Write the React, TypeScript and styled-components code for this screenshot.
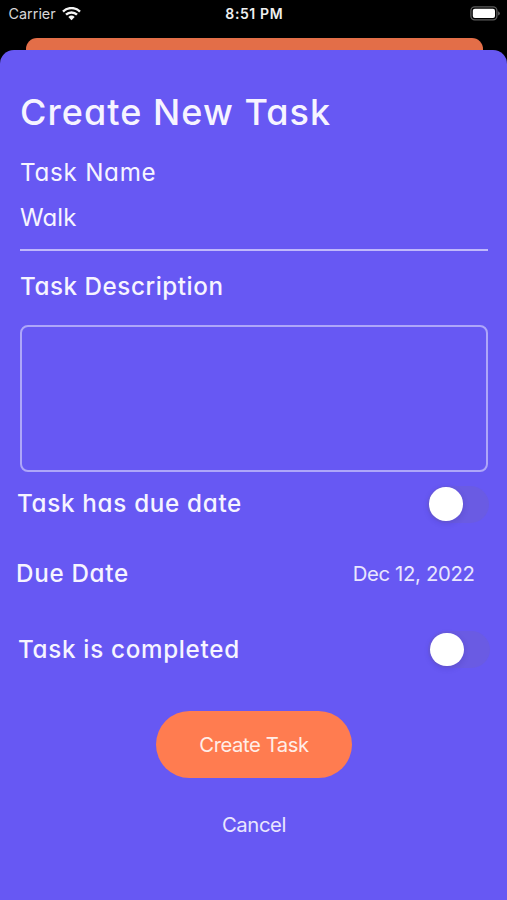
import React, { useState } from "react";
import styled, { createGlobalStyle } from "styled-components";

const GlobalStyle = createGlobalStyle`
  * { box-sizing: border-box; }
  body { margin: 0; background: #000; }
  button, input, textarea { font: inherit; color: inherit; }
`;

const Screen = styled.div`
  display: flex;
  flex-direction: column;
  width: 507px;
  height: 900px;
  overflow: hidden;
  background: #000;
  color: #f6f4ff;
  font-family: Inter, sans-serif;
`;

const StatusBar = styled.header`
  display: grid;
  grid-template-columns: 1fr auto 1fr;
  align-items: center;
  height: 28px;
  margin-bottom: 9.5px;
  padding: 0 7px 0 8.5px;
  flex: none;
`;

const Carrier = styled.div`
  display: flex;
  align-items: center;
  gap: 6px;
  font-size: 14.4px;
  line-height: 28px;
  color: #d6d6d6;
`;

const Clock = styled.div`
  margin-top: -1px;
  font-size: 14px;
  font-weight: 600;
  letter-spacing: 0.6px;
  color: #efefef;
`;

const Battery = styled.svg`
  justify-self: end;
  margin-bottom: 1px;
`;

const BackCard = styled.div`
  flex: none;
  height: 28px;
  margin: 0 24.5px 0 25.5px;
  border-radius: 11px 11px 0 0;
  background: #e36e48;
`;

const Sheet = styled.main`
  flex: none;
  display: flex;
  flex-direction: column;
  height: 850.5px;
  margin-top: -15.9px;
  padding: 0 19px 0 20px;
  border-radius: 14px 14px 0 0;
  background: #6758f3;
`;

const Title = styled.h1`
  margin: 34.6px 0 0;
  font-size: 36px;
  font-weight: 500;
  line-height: 56px;
  letter-spacing: 1.05px;
  font-feature-settings: "cv11";
  white-space: nowrap;
`;

const Label = styled.label<{ $weight?: number; $spacing?: number }>`
  display: block;
  font-size: 24.2px;
  font-weight: ${(p) => p.$weight ?? 500};
  line-height: 40px;
  letter-spacing: ${(p) => p.$spacing ?? 0.7}px;
  font-feature-settings: "cv11";
  white-space: nowrap;
`;

const NameField = styled.div`
  display: flex;
  flex-direction: column;
  margin-top: 13px;
`;

const NameInput = styled.input`
  width: 100%;
  height: 54px;
  margin-top: 4px;
  padding: 0 0 11px;
  border: 0;
  border-bottom: 2px solid #bfb8fb;
  border-radius: 0;
  outline: 0;
  background: transparent;
  font-size: 24px;
  letter-spacing: 0.1px;
  font-feature-settings: "cv11";
`;

const DescriptionField = styled.div`
  display: flex;
  flex-direction: column;
  margin-top: 15.5px;
`;

const DescriptionInput = styled.textarea`
  width: 100%;
  height: 147.3px;
  margin-top: 18px;
  padding: 10px;
  border: 2px solid #aea6f9;
  border-radius: 8px;
  outline: 0;
  resize: none;
  background: transparent;
`;

const OptionRow = styled.div<{ $top: number; $shift?: number }>`
  display: flex;
  align-items: center;
  justify-content: space-between;
  height: 40px;
  margin: ${(p) => p.$top}px -2px 0 ${(p) => p.$shift ?? -3}px;
`;

const Track = styled.button<{ $on: boolean; $shift: number }>`
  display: flex;
  align-items: center;
  justify-content: ${(p) => (p.$on ? "flex-end" : "flex-start")};
  width: 62px;
  height: 37px;
  margin-right: ${(p) => -p.$shift}px;
  padding: 0 2px;
  border: 0;
  border-radius: 19px;
  background: ${(p) => (p.$on ? "#34c759" : "#6a5be3")};
`;

const Knob = styled.span`
  width: 33.5px;
  height: 33.5px;
  border-radius: 50%;
  background: #fff;
  box-shadow: 0 2px 6px rgba(30, 20, 100, 0.16);
`;

const DateValue = styled.span`
  margin-right: 15.5px;
  font-size: 20.3px;
  letter-spacing: -0.33px;
  color: #e9e6fe;
`;

const Actions = styled.div`
  display: flex;
  flex-direction: column;
  align-items: center;
  margin-top: 41.3px;
`;

const PrimaryButton = styled.button`
  width: 196px;
  height: 67px;
  padding: 0;
  border: 0;
  border-radius: 34px;
  background: #ff7c50;
  color: #ffeee8;
  font-size: 20.3px;
  letter-spacing: -0.45px;
`;

const CancelButton = styled.button`
  margin-top: 27px;
  padding: 0 20px;
  border: 0;
  background: transparent;
  color: #e9e6fe;
  font-size: 20.3px;
  line-height: 40px;
  letter-spacing: -0.4px;
`;

const WifiIcon = () => (
  <svg width="19" height="14" viewBox="0 0 19 14">
    <g fill="none" stroke="#f4f4f4" strokeWidth="2.4">
      <path d="M1 4.6A12 12 0 0 1 18 4.6" />
      <path d="M4 7.7A7.8 7.8 0 0 1 15 7.7" />
    </g>
    <path d="M6.3 10Q9.5 7.2 12.7 10L9.5 13.3Z" fill="#f4f4f4" />
  </svg>
);

function Toggle({ label, shift = 0 }: { label: string; shift?: number }) {
  const [on, setOn] = useState(false);
  return (
    <Track type="button" role="switch" aria-label={label} aria-checked={on} $on={on} $shift={shift} onClick={() => setOn(!on)}>
      <Knob />
    </Track>
  );
}

export default function App() {
  const [name, setName] = useState("Walk");
  return (
    <Screen>
      <GlobalStyle />
      <StatusBar>
        <Carrier>
          Carrier
          <WifiIcon />
        </Carrier>
        <Clock>8:51 PM</Clock>
        <Battery width="30" height="15" viewBox="0 0 30 15">
          <rect x="0.9" y="0.9" width="26" height="13" rx="3.8" fill="none" stroke="#5c5c5c" strokeWidth="1.3" />
          <rect x="2.8" y="2.8" width="22.2" height="9.2" rx="2" fill="#fff" />
          <path d="M28.2 5.3Q29.8 6 29.8 7.4T28.2 9.5Z" fill="#6a6a6a" />
        </Battery>
      </StatusBar>
      <BackCard />
      <Sheet>
        <Title>Create New Task</Title>
        <NameField>
          <Label htmlFor="task-name" $weight={400} $spacing={0.75}>Task Name</Label>
          <NameInput id="task-name" value={name} onChange={(e) => setName(e.target.value)} />
        </NameField>
        <DescriptionField>
          <Label htmlFor="task-description" $spacing={0.55}>Task Description</Label>
          <DescriptionInput id="task-description" />
        </DescriptionField>
        <OptionRow $top={12}>
          <Label as="span">Task has due date</Label>
          <Toggle label="Task has due date" shift={-1} />
        </OptionRow>
        <OptionRow $top={29.5} $shift={-4}>
          <Label as="span">Due Date</Label>
          <DateValue>Dec 12, 2022</DateValue>
        </OptionRow>
        <OptionRow $top={36} $shift={-2}>
          <Label as="span">Task is completed</Label>
          <Toggle label="Task is completed" />
        </OptionRow>
        <Actions>
          <PrimaryButton type="button">Create Task</PrimaryButton>
          <CancelButton type="button">Cancel</CancelButton>
        </Actions>
      </Sheet>
    </Screen>
  );
}
